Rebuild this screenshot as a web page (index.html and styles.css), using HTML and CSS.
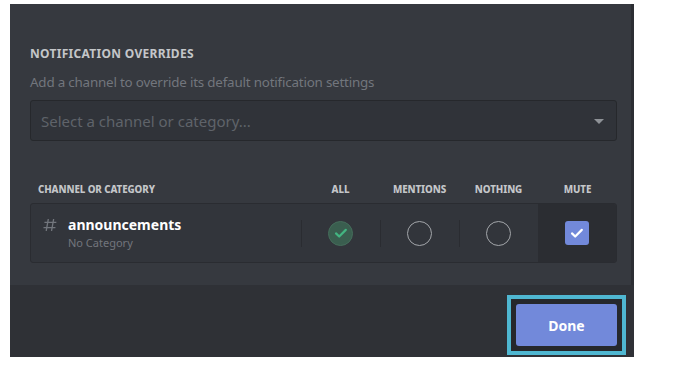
FILE: index.html
```html
<!DOCTYPE html>
<html lang="en">
<head>
    <meta charset="UTF-8">
    <title>Notification Overrides</title>
    <link rel="stylesheet" href="styles.css">
</head>
<body>
    <div class="modal">
        <div class="content">
            <h5 class="titulo">Notification Overrides</h5>
            <p class="descricao">Add a channel to override its default notification settings</p>

            <div class="select">
                <span class="placeholder">Select a channel or category...</span>
                <span class="caret"></span>
            </div>

            <div class="linha cabecalho">
                <div class="nome">Channel or Category</div>
                <div class="celula">All</div>
                <div class="celula">Mentions</div>
                <div class="celula">Nothing</div>
                <div class="celula">Mute</div>
            </div>

            <div class="linha canal">
                <div class="nome">
                    <svg class="hash" width="16" height="16" viewBox="0 0 24 24">
                        <path fill="currentColor" d="M5.89 21c-.31 0-.55-.28-.5-.59L6 17H2.6c-.31 0-.55-.28-.5-.59l.18-1c.04-.24.25-.41.49-.41h3.58l1.06-6H4c-.31 0-.55-.28-.49-.59l.17-1c.04-.24.25-.41.5-.41h3.58l.63-3.59c.05-.24.25-.41.5-.41h.98c.31 0 .55.28.49.59L9.76 7h6l.64-3.59c.04-.24.25-.41.49-.41h.98c.31 0 .55.28.5.59L17.76 7h3.4c.31 0 .55.28.5.59l-.18 1c-.04.24-.25.41-.49.41h-3.58l-1.06 6h3.4c.31 0 .55.28.5.59l-.18 1c-.04.24-.25.41-.49.41H16l-.64 3.59c-.04.24-.25.41-.49.41h-.98c-.31 0-.55-.28-.5-.59L14 17H8l-.64 3.59c-.04.24-.25.41-.49.41h-.98zM9.41 9l-1.06 6h6l1.06-6h-6z"/>
                    </svg>
                    <div>
                        <div class="canal-nome">announcements</div>
                        <div class="canal-cat">No Category</div>
                    </div>
                </div>
                <div class="celula sep">
                    <span class="radio marcado">
                        <svg width="16" height="16" viewBox="0 0 16 16">
                            <path d="M3 8.4l3.2 3.1 6.6-6.6" fill="none" stroke="#43b581" stroke-width="2.2" stroke-linecap="round" stroke-linejoin="round"/>
                        </svg>
                    </span>
                </div>
                <div class="celula sep"><span class="radio"></span></div>
                <div class="celula sep"><span class="radio"></span></div>
                <div class="celula mudo">
                    <span class="check">
                        <svg width="16" height="16" viewBox="0 0 16 16">
                            <path d="M3 8.4l3.2 3.1 6.6-6.6" fill="none" stroke="#fff" stroke-width="2.2" stroke-linecap="round" stroke-linejoin="round"/>
                        </svg>
                    </span>
                </div>
            </div>
        </div>

        <div class="rodape">
            <div class="destaque">
                <button class="botao">Done</button>
            </div>
        </div>
    </div>
</body>
</html>
```

FILE: styles.css
```css
body{
    margin: 0;
    background: #ffffff;
    font-family: "Noto Sans", "Open Sans", sans-serif;
}

.modal{
    margin: 4px 0 0 10px;
    width: 624px;
    height: 353px;
    display: flex;
    flex-direction: column;
}

.content{
    flex: 1;
    background: #36393f;
    border-right: 3px solid #2c2e33;
    padding: 42px 14px 0 20px;
}

.titulo{
    margin: 0;
    font-size: 12px;
    line-height: 16px;
    font-weight: 700;
    text-transform: uppercase;
    letter-spacing: 0.3px;
    color: #c4c6c9;
}

.descricao{
    margin: 11px 0 0 0;
    font-size: 13.4px;
    line-height: 18px;
    color: #72767d;
    letter-spacing: -0.2px;
}

.select{
    margin-top: 9px;
    height: 41px;
    box-sizing: border-box;
    background: #303339;
    border: 1px solid #26282c;
    border-radius: 3px;
    display: flex;
    align-items: center;
    justify-content: space-between;
    padding: 0 12px 0 10px;
}

.placeholder{
    font-size: 15px;
    color: #5f636a;
}

.caret{
    width: 0;
    height: 0;
    border-left: 5px solid transparent;
    border-right: 5px solid transparent;
    border-top: 5px solid #8e9297;
    margin-top: 2px;
}

.linha{
    display: flex;
    align-items: center;
}

.nome{
    flex: 1;
}

.celula{
    width: 79px;
    display: flex;
    align-items: center;
    justify-content: center;
}

.cabecalho{
    margin-top: 41px;
    height: 14px;
    font-size: 9.8px;
    font-weight: 800;
    text-transform: uppercase;
    color: #c4c6c9;
    letter-spacing: -0.1px;
}

.cabecalho .nome{
    padding-left: 8px;
}

.canal{
    margin-top: 7px;
    height: 60px;
    box-sizing: border-box;
    background: #32353b;
    border: 1px solid #2a2c31;
    border-radius: 3px;
    align-items: stretch;
}

.canal .nome{
    display: flex;
    align-items: center;
    padding-left: 11px;
    color: #72767d;
}

.hash{
    margin-right: 10px;
    margin-top: -16px;
}

.canal-nome{
    font-size: 14px;
    font-weight: 700;
    color: #ffffff;
    line-height: 18px;
}

.canal-cat{
    font-size: 11px;
    color: #72767d;
    line-height: 16px;
    margin-top: 1px;
}

.sep{
    position: relative;
}

.sep::before{
    content: "";
    position: absolute;
    left: 0;
    top: 16px;
    height: 27px;
    width: 1px;
    background: #2a2c31;
}

.radio{
    width: 23px;
    height: 23px;
    border: 1px solid #a3a6aa;
    border-radius: 50%;
    display: flex;
    align-items: center;
    justify-content: center;
}

.radio.marcado{
    background: #3a5e4f;
    border-color: #456d5b;
}

.mudo{
    width: 78px;
    background: #2b2d32;
    border-radius: 0 3px 3px 0;
}

.check{
    width: 24px;
    height: 24px;
    border-radius: 3px;
    background: #7289da;
    display: flex;
    align-items: center;
    justify-content: center;
}

.rodape{
    height: 72px;
    background: #2f3136;
    display: flex;
    justify-content: flex-end;
    align-items: flex-end;
    padding: 0 8px 2px 0;
    box-sizing: border-box;
}

.destaque{
    border: 4px solid #4fb7d1;
    background: #26282c;
    padding: 5px;
}

.botao{
    width: 101px;
    height: 42px;
    border: none;
    border-radius: 3px;
    background: #7289da;
    color: #ffffff;
    font-family: "Noto Sans", "Open Sans", sans-serif;
    font-size: 14px;
    font-weight: 700;
}
```
